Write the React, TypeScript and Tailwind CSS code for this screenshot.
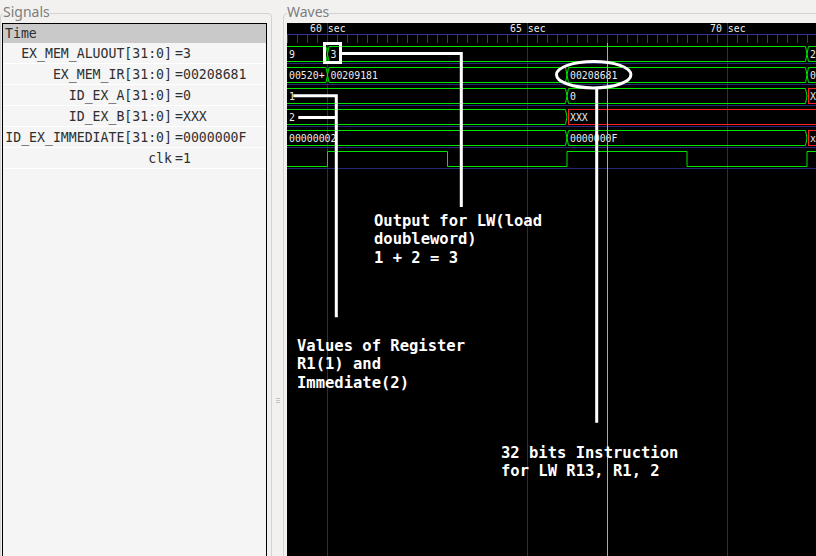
import React from "react";

const GREEN = "#00e400";
const RED = "#ff1f1f";
const GRID = "#27277a";
const RULER = "#34349c";
const TXT = "#ececec";

type Seg = { a: number; b: number; t: string; x?: boolean };

const rows: Seg[][] = [
  [
    { a: -10, b: 40.5, t: "9" },
    { a: 40.5, b: 520, t: "3" },
    { a: 520, b: 600, t: "2" },
  ],
  [
    { a: -10, b: 40.5, t: "00520+" },
    { a: 40.5, b: 280, t: "00209181" },
    { a: 280, b: 520, t: "00208681" },
    { a: 520, b: 600, t: "0" },
  ],
  [
    { a: -10, b: 280, t: "1" },
    { a: 280, b: 520, t: "0" },
    { a: 521.5, b: 600, t: "X", x: true },
  ],
  [
    { a: -10, b: 280, t: "2" },
    { a: 281.5, b: 600, t: "XXX", x: true },
  ],
  [
    { a: -10, b: 280, t: "00000002" },
    { a: 280, b: 520, t: "0000000F" },
    { a: 521.5, b: 600, t: "x", x: true },
  ],
];

const signals = [
  { name: "EX_MEM_ALUOUT[31:0]", value: "3" },
  { name: "EX_MEM_IR[31:0]", value: "00208681" },
  { name: "ID_EX_A[31:0]", value: "0" },
  { name: "ID_EX_B[31:0]", value: "XXX" },
  { name: "ID_EX_IMMEDIATE[31:0]", value: "0000000F" },
  { name: "clk", value: "1" },
];

const CW = 5.93; // glyph advance of the wave font

function Label({ x, y, t }: { x: number; y: number; t: string }) {
  return (
    <text
      x={x}
      y={y}
      fill={TXT}
      fontSize={11}
      fontFamily="DejaVu Sans Mono, monospace"
      textLength={t.length * CW}
      lengthAdjust="spacingAndGlyphs"
    >
      {t}
    </text>
  );
}

function WaveCanvas() {
  const ticks = Array.from({ length: 56 }, (_, i) => 0.5 + i * 10);
  return (
    <svg width={540} height={540} className="block">
      {/* ruler */}
      <line x1={0} y1={11.5} x2={540} y2={11.5} stroke={RULER} />
      {ticks.map((x) => (
        <line key={x} x1={x} y1={11.5} x2={x} y2={20} stroke={RULER} />
      ))}
      {[
        { x: 23, t: "60 sec" },
        { x: 223, t: "65 sec" },
        { x: 423, t: "70 sec" },
      ].map((l) => (
        <Label key={l.x} x={l.x} y={9.3} t={l.t} />
      ))}

      {/* grid */}
      {[40.5, 240.5, 440.5].map((x) => (
        <line key={x} x1={x} y1={0} x2={x} y2={540} stroke={GRID} />
      ))}
      {[0, 1, 2, 3, 4, 5].map((i) => (
        <line key={i} x1={0} y1={40.5 + 21 * i} x2={540} y2={40.5 + 21 * i} stroke={GRID} />
      ))}

      {/* buses */}
      {rows.map((segs, i) => {
        const top = 23.5 + 21 * i;
        const bot = 38.5 + 21 * i;
        const mid = (top + bot) / 2;
        return (
          <g key={i}>
            {segs.map((s) =>
              s.x ? (
                <rect
                  key={s.a}
                  x={s.a}
                  y={top}
                  width={s.b - s.a}
                  height={bot - top}
                  fill="none"
                  stroke={RED}
                />
              ) : (
                <path
                  key={s.a}
                  d={`M ${s.a} ${mid} L ${s.a + 1.5} ${top} L ${s.b - 1.5} ${top} L ${s.b} ${mid} L ${s.b - 1.5} ${bot} L ${s.a + 1.5} ${bot} Z`}
                  fill="none"
                  stroke={GREEN}
                />
              )
            )}
            {segs.map((s) => (
              <Label key={s.a} x={s.a < 0 ? 2 : s.a + (s.x ? 1.5 : 3)} y={34.7 + 21 * i} t={s.t} />
            ))}
          </g>
        );
      })}

      {/* clk */}
      <path
        d="M 0 143.5 H 40.5 V 128.5 H 160.5 V 143.5 H 280 V 128.5 H 400 V 143.5 H 520 V 128.5 H 560"
        fill="none"
        stroke={GREEN}
      />

      {/* cursor */}
      <line x1={320.5} y1={20} x2={320.5} y2={540} stroke="#f28b8b" />

      {/* annotations */}
      <g stroke="#fff" strokeWidth={3} fill="none">
        <rect x={37.5} y={20.5} width={16} height={19} />
        <path d="M 53.5 30.5 H 174.3 V 184" />
        <path d="M 6.3 72.8 H 49.3 M 11.3 94.5 H 49.3 M 49.3 71.3 V 294.3" />
        <ellipse cx={306.7} cy={51.7} rx={37.2} ry={13.2} />
        <path d="M 309.7 65 V 399.7" />
      </g>
    </svg>
  );
}

const note = "absolute whitespace-pre font-['DejaVu_Sans_Mono',monospace] text-[15.5px] leading-[18.3px] font-bold text-white";

export default function App() {
  return (
    <div className="flex h-[556px] w-[816px] overflow-hidden bg-[#f2f1f0] font-['Noto_Sans',sans-serif]">
      {/* Signals pane */}
      <fieldset className="mt-[3px] h-[580px] w-[272px] shrink-0 rounded-[4px] border border-[#d3d3d3] pl-px pr-[4px]">
        <legend className="ml-px pb-[2px] text-[14px] leading-[18px] text-[#7d7d7d]">Signals</legend>
        <div className="h-[560px] border border-black bg-[#f5f5f5] font-['DejaVu_Sans_Mono',monospace] text-[13.2px] text-[#2f2f2f]">
          <div className="h-[19px] bg-[#c9c9c9] pl-[2px] leading-[20px]">Time</div>
          {signals.map((s) => (
            <div key={s.name} className="flex h-[21px] items-center border-b border-white pt-[2px]">
              <span className="w-[169px] shrink-0 whitespace-pre text-right">{s.name}</span>
              <span className="whitespace-pre pl-[3px]">={s.value}</span>
            </div>
          ))}
        </div>
      </fieldset>

      {/* splitter */}
      <div className="flex w-[11px] shrink-0 flex-col items-center gap-[1px] pt-[398px]">
        <div className="h-px w-[4px] bg-[#c4c4c4]" />
        <div className="h-px w-[4px] bg-[#c4c4c4]" />
        <div className="h-px w-[4px] bg-[#c4c4c4]" />
      </div>

      {/* Waves pane */}
      <fieldset className="mt-[3px] h-[580px] w-[560px] shrink-0 rounded-[4px] border border-[#d3d3d3] pl-[3px]">
        <legend className="pb-[2px] text-[14px] leading-[18px] text-[#7d7d7d]">Waves</legend>
        <div className="relative h-[560px] w-[540px] bg-black">
          <WaveCanvas />
          <div className={`${note} left-[87px] top-[189px]`}>{"Output for LW(load\ndoubleword)\n1 + 2 = 3"}</div>
          <div className={`${note} left-[10px] top-[314px]`}>{"Values of Register\nR1(1) and\nImmediate(2)"}</div>
          <div className={`${note} left-[214px] top-[421px]`}>{"32 bits Instruction\nfor LW R13, R1, 2"}</div>
        </div>
      </fieldset>
    </div>
  );
}
